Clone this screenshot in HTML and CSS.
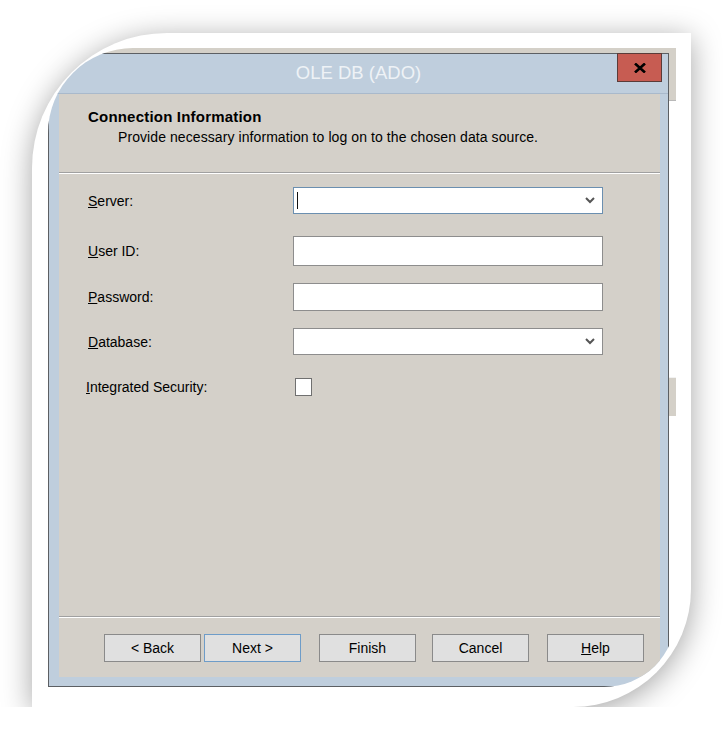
FILE: index.html
```html
<!DOCTYPE html>
<html lang="en">
<head>
  <meta charset="UTF-8">
  <meta name="viewport" content="width=device-width, initial-scale=1.0">
  <title>OLE DB (ADO)</title>
  <link rel="stylesheet" href="styles.css">
</head>
<body>
  <div class="card">
    <div class="shot">
      <div class="bg-strip"></div>
      <div class="shot-body">
        <div class="dialog">
          <div class="titlebar">
            <span></span>
            <div class="title">OLE DB (ADO)</div>
            <div class="close">
              <svg width="12" height="10" viewBox="0 0 12 10"><path d="M1 0.5 L11 9.5 M11 0.5 L1 9.5" stroke="#000" stroke-width="2.6"/></svg>
            </div>
          </div>
          <div class="client">
            <div class="header">
              <div class="heading">Connection Information</div>
              <div class="subheading">Provide necessary information to log on to the chosen data source.</div>
            </div>
            <div class="sep"></div>
            <div class="form">
              <div class="row">
                <label><u>S</u>erver:</label>
                <div class="field combo focused"><span class="caret"></span>
                  <svg class="chev" width="10" height="7" viewBox="0 0 10 7"><path d="M1 1 L5 5 L9 1" fill="none" stroke="#555" stroke-width="2"/></svg>
                </div>
              </div>
              <div class="row tall">
                <label><u>U</u>ser ID:</label>
                <div class="field"></div>
              </div>
              <div class="row mid">
                <label><u>P</u>assword:</label>
                <div class="field"></div>
              </div>
              <div class="row">
                <label><u>D</u>atabase:</label>
                <div class="field combo">
                  <svg class="chev" width="10" height="7" viewBox="0 0 10 7"><path d="M1 1 L5 5 L9 1" fill="none" stroke="#555" stroke-width="2"/></svg>
                </div>
              </div>
              <div class="row check-row">
                <label class="check-label"><u>I</u>ntegrated Security:</label>
                <div class="checkbox"></div>
              </div>
            </div>
            <div class="sep"></div>
            <div class="footer">
              <button class="btn">&lt; Back</button>
              <button class="btn default">Next &gt;</button>
              <button class="btn spaced">Finish</button>
              <button class="btn spaced">Cancel</button>
              <button class="btn spaced"><u>H</u>elp</button>
            </div>
          </div>
        </div>
        <div class="bg-side">
          <div class="bg-side-top"></div>
          <div class="bg-side-box"></div>
        </div>
      </div>
    </div>
  </div>
</body>
</html>
```

FILE: styles.css
```css
body { margin: 0; background: #fff; font-family: "Liberation Sans", Arial, sans-serif; font-size: 14px; color: #000; }
.card { width: 659px; height: 674px; margin: 33px 0 0 32px; box-sizing: border-box; padding: 15px 15px 20px 16px; background: #fff; border-radius: 135px 0 118px 0; box-shadow: 0 5px 30px rgba(0,0,0,0.36); }
.shot { height: 639px; border-radius: 85px 0 72px 0; overflow: hidden; display: flex; flex-direction: column; background: #fff; }
.bg-strip { height: 5px; background: #d4d0c8; flex: none; }
.shot-body { display: flex; flex: 1; }
.dialog { width: 621px; box-sizing: border-box; border: 1px solid #5c5f63; background: #bfcedd; display: flex; flex-direction: column; }
.titlebar { height: 39px; border-bottom: 1px solid #a9b9cb; display: grid; grid-template-columns: 1fr auto 1fr; align-items: start; }
.title { margin-top: 8px; font-size: 18.5px; line-height: 22px; color: #eef2f6; }
.close { justify-self: end; margin-right: 6px; margin-top: -1px; width: 45px; height: 29px; box-sizing: border-box; background: #c75c52; border: 1px solid #5b3b38; display: flex; align-items: center; justify-content: center; }
.client { flex: 1; margin: 0 8px 9px 10px; background: #d4d0c9; display: flex; flex-direction: column; }
.header { height: 78px; box-sizing: border-box; padding: 14px 0 0 29px; }
.heading { font-size: 15px; font-weight: bold; line-height: 18px; letter-spacing: 0.2px; }
.subheading { margin: 3px 0 0 30px; line-height: 17px; letter-spacing: 0.08px; }
.sep { height: 1px; background: #a0a0a0; border-bottom: 1px solid #fff; flex: none; }
.form { flex: 1; padding: 13px 0 0 29px; }
.row { display: flex; align-items: center; }
.row label { width: 205px; }
.row + .row { margin-top: 17px; }
.row.tall { margin-top: 22px; }
.field { width: 310px; height: 27px; box-sizing: border-box; background: #fff; border: 1px solid #8d8d8d; display: flex; align-items: center; }
.tall .field { height: 30px; }
.mid .field { height: 28px; }
.combo { justify-content: space-between; padding: 0 7px 0 3px; }
.focused { border-color: #6b8fb0; }
.caret { width: 1px; height: 17px; background: #111; }
.chev { margin-left: auto; }
.row.check-row { margin-top: 23px; }
.check-label { margin-left: -2px; width: 209px !important; }
.checkbox { width: 17px; height: 18px; box-sizing: border-box; background: #fff; border: 1px solid #707070; }
.footer { height: 59px; box-sizing: border-box; padding: 16px 0 0 45px; display: flex; align-items: flex-start; }
.btn { width: 97px; height: 28px; box-sizing: border-box; background: #e0e0e0; border: 1px solid #8a8a8a; font-family: inherit; font-size: 14px; color: #000; padding: 0; margin-left: 3px; }
.btn:first-child { margin-left: 0; }
.btn.default { border-color: #6e9cc8; }
.btn.spaced { margin-left: 18px; }
.btn.spaced:nth-child(4) { margin-left: 16px; }
.bg-side { width: 7px; display: flex; flex-direction: column; }
.bg-side-top { height: 47px; background: #d4d0c8; border-bottom: 1px solid #b8b8b8; }
.bg-side-box { margin-top: 276px; height: 38px; background: #d4d0c8; border-top: 1px solid #f2f2f2; }
```
